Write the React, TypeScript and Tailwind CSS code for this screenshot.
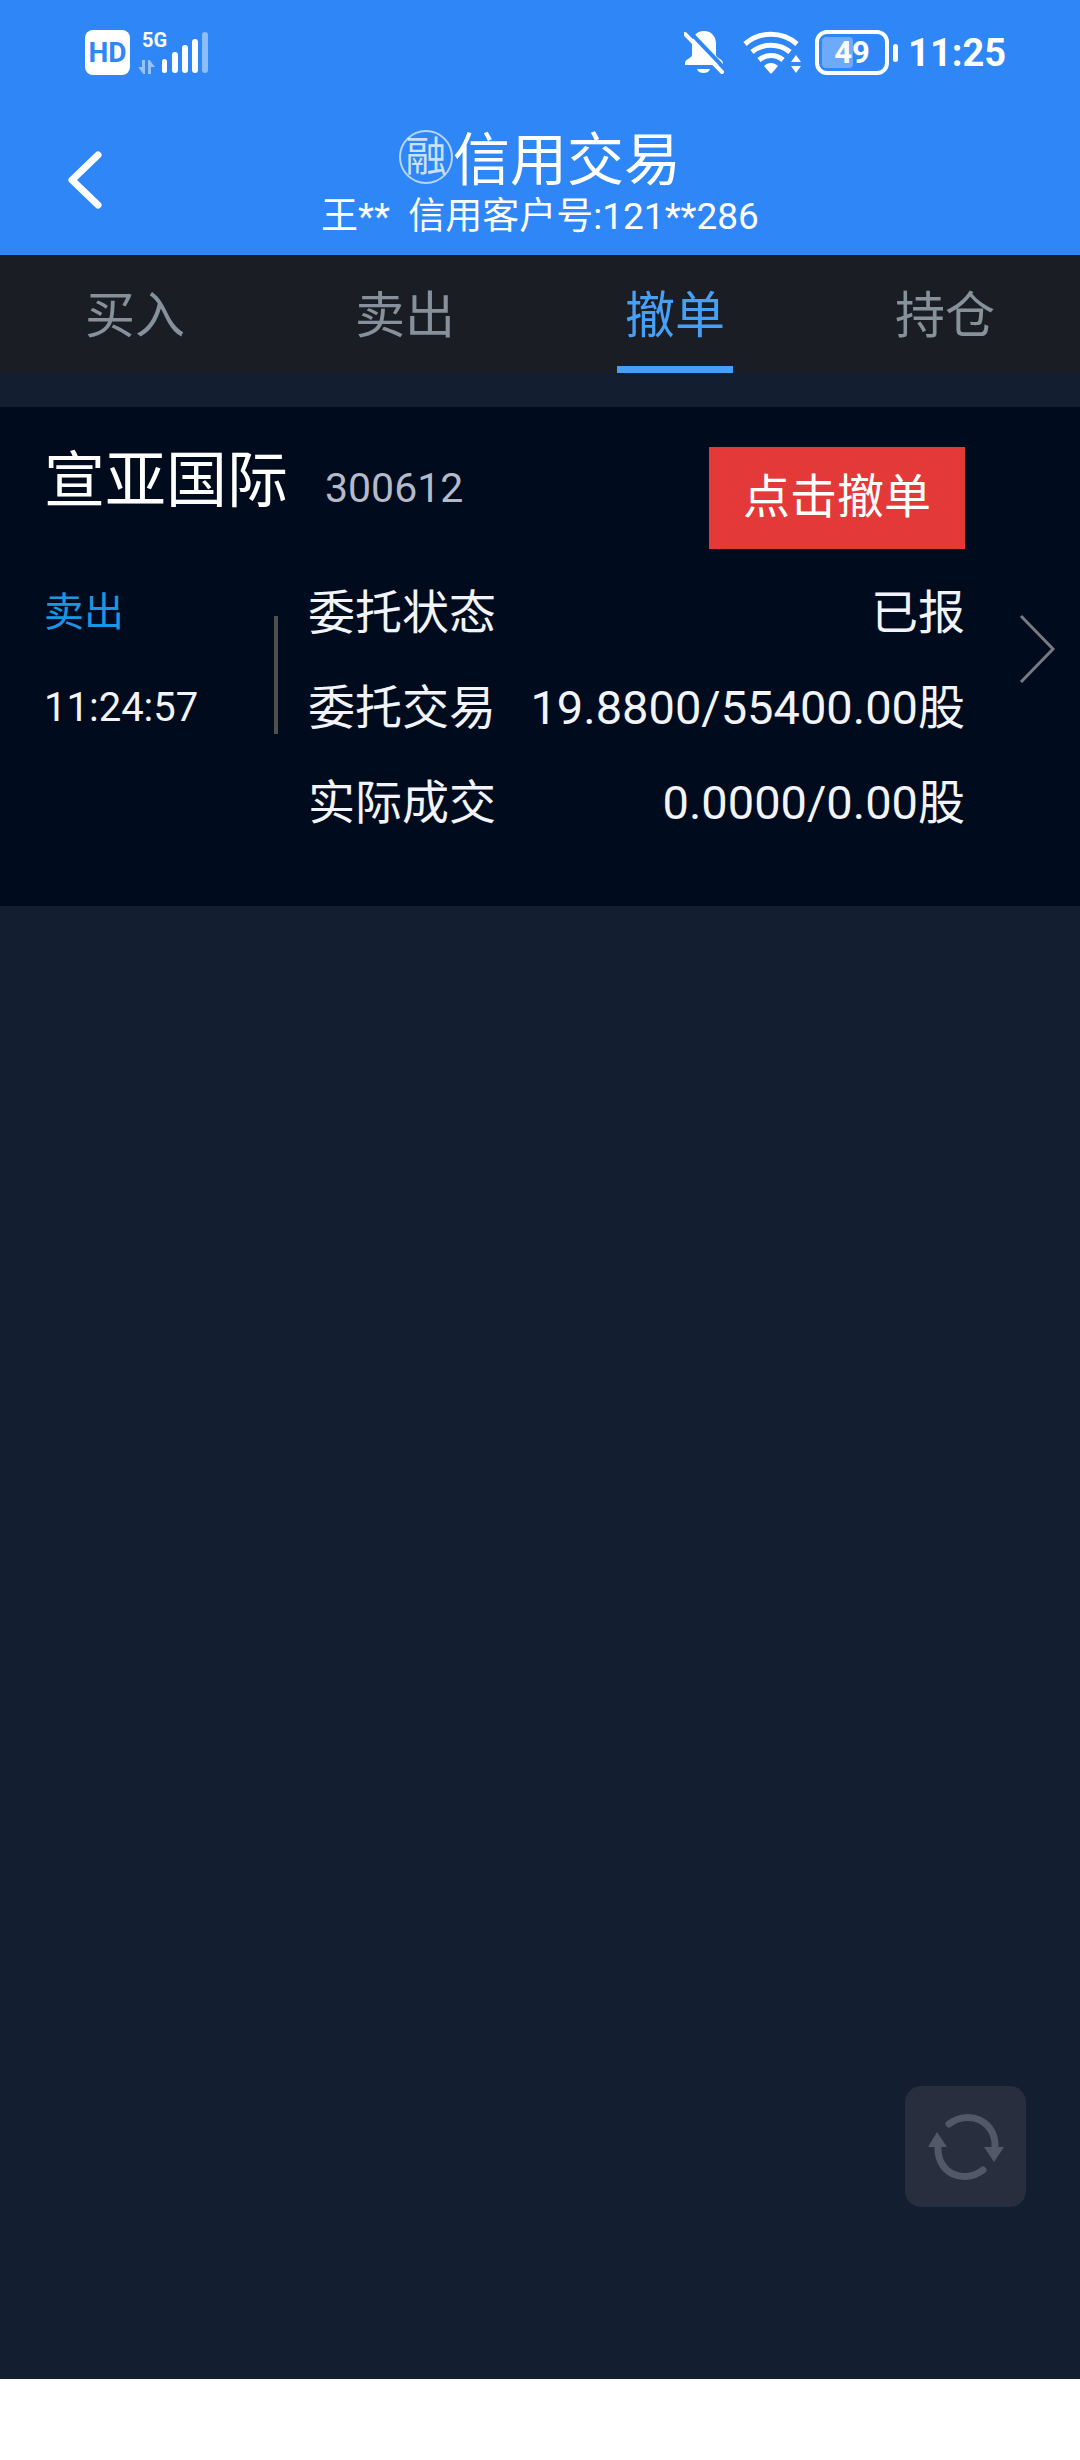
import { useState } from "react";

const tabs = ["买入", "卖出", "撤单", "持仓"];

const order = {
  name: "宣亚国际",
  code: "300612",
  side: "卖出",
  time: "11:24:57",
  rows: [
    { label: "委托状态", value: "已报" },
    { label: "委托交易", value: "19.8800/55400.00股" },
    { label: "实际成交", value: "0.0000/0.00股" }
  ]
};

function SignalIcon() {
  return (
    <svg width="70" height="45" viewBox="0 0 70 45" fill="#fff" aria-hidden="true">
      <g opacity="0.5">
        <path d="M4 30h3v14H5.500L0 37h4z" />
        <path d="M10 30h1.500L17 37h-4v7h-3z" />
      </g>
      <rect x="24" y="29" width="5" height="14" rx="2.500" />
      <rect x="34" y="22" width="6" height="21" rx="3" />
      <rect x="44" y="15" width="6" height="28" rx="3" />
      <rect x="54" y="9" width="6" height="34" rx="3" />
      <rect x="64" y="2" width="6" height="41" rx="3" opacity="0.45" />
    </svg>
  );
}

function BellOffIcon() {
  return (
    <svg width="40" height="45" viewBox="0 0 40 45" aria-hidden="true">
      <path d="M20 1C12 1 8 7 8 14v11c0 3-7 4-7 8v2h38v-2c0-4-7-5-7-8V14C32 7 28 1 20 1z" fill="#fff" />
      <path d="M13 39h13c-1 3-4 4-6.500 4S14 42 13 39z" fill="#fff" />
      <path d="M4 0l38 40" stroke="#2f86f6" strokeWidth="4" />
      <path d="M1 4l37 38" stroke="#fff" strokeWidth="4" strokeLinecap="round" />
    </svg>
  );
}

function WifiIcon() {
  return (
    <svg width="58" height="45" viewBox="0 0 58 45" aria-hidden="true">
      <g fill="none" stroke="#fff" strokeWidth="5">
        <path d="M2 14C17 1 39 1 54 14" />
        <path d="M9 22c11-9 27-9 38 0" />
        <path d="M16 30c7-6 17-6 24 0" />
      </g>
      <path d="M21 36c4-4 10-4 14 0l-6 7q-1 1-2 0z" fill="#fff" />
      <path d="M53 25l5 7H48zM48 36h10l-5 7z" fill="#fff" />
    </svg>
  );
}

function RefreshIcon() {
  return (
    <svg width="76" height="68" viewBox="0 0 76 68" aria-hidden="true">
      <g fill="none" stroke="#515868" strokeWidth="7" strokeLinecap="round">
        <path d="M21 11C41-4 68 8 67 34" />
        <path d="M55 57C35 72 9 60 10 34" />
      </g>
      <path d="M56 34h20L66 49zM0 34h19L9 19z" fill="#515868" />
    </svg>
  );
}

function StatusBar() {
  return (
    <div className="flex h-[105px] items-center justify-between pr-[74px] pl-[85px] font-bold">
      <div className="flex items-center">
        <span className="flex size-[45px] items-center justify-center rounded-lg bg-white text-[28px] leading-none text-[#2f86f6]">
          HD
        </span>
        <div className="relative ml-2">
          <SignalIcon />
          <span className="absolute top-0 left-1 text-[20px] leading-5">5G</span>
        </div>
      </div>
      <div className="flex items-center">
        <BellOffIcon />
        <span className="ml-[19px]">
          <WifiIcon />
        </span>
        <div className="relative ml-[14px] flex h-[45px] w-[74px] items-center justify-center rounded-xl border-4 border-white">
          <span className="absolute inset-y-[3px] left-[3px] w-[31px] rounded-sm bg-white/30" />
          <span className="relative text-[31px] leading-none">49</span>
        </div>
        <span className="ml-1 h-[18px] w-[5px] rounded-full bg-white" />
        <span className="ml-[10px] text-[38px] leading-none">11:25</span>
      </div>
    </div>
  );
}

function TitleBar() {
  return (
    <div className="grid h-[150px] grid-cols-[170px_1fr_170px]">
      <button type="button" aria-label="返回" className="flex items-center pl-[67px]">
        <svg width="36" height="60" viewBox="0 0 36 60" fill="none" stroke="#fff" strokeWidth="7" strokeLinecap="round" strokeLinejoin="round">
          <path d="M31 5L5 30l26 25" />
        </svg>
      </button>
      <div className="flex flex-col items-center pt-[25px]">
        <h1 className="flex items-start text-[57px] leading-[62px]">
          <span className="flex size-[54px] items-center justify-center rounded-full border-2 border-white/65 text-[41px] leading-none text-white/75">
            融
          </span>
          信用交易
        </h1>
        <p className="text-[37px] leading-[50px] whitespace-pre">王**  信用客户号:121**286</p>
      </div>
    </div>
  );
}

function OrderCard() {
  return (
    <section className="flex bg-[#000b1e] pt-10 pr-[24px] pb-[56px] pl-[44px] text-[#f2f4fa]">
      <div className="flex-1">
        <div className="flex items-start justify-between">
          <div className="flex items-baseline gap-[37px]">
            <h2 className="text-[61px] leading-[68px] text-white">{order.name}</h2>
            <span className="text-[41px] text-[#b4bac8]">{order.code}</span>
          </div>
          <button type="button" className="h-[102px] bg-[#e33939] px-[34px] pb-1 text-[47px] leading-none text-white">
            点击撤单
          </button>
        </div>
        <div className="mt-4 flex">
          <div className="w-[230px] text-[40px] leading-[95px]">
            <p className="text-[#1a97e0]">{order.side}</p>
            <p>{order.time}</p>
          </div>
          <span className="mt-[51px] h-[118px] w-1 bg-[#4f504d]" />
          <dl className="ml-[30px] flex-1 text-[47px] leading-[95px]">
            {order.rows.map((row) => (
              <div key={row.label} className="flex justify-between">
                <dt>{row.label}</dt>
                <dd>{row.value}</dd>
              </div>
            ))}
          </dl>
        </div>
      </div>
      <button type="button" aria-label="查看详情" className="ml-[54px] self-center">
        <svg width="37" height="70" viewBox="0 0 37 70" fill="none" stroke="#777a80" strokeWidth="3">
          <path d="M2 2l32 33L2 68" />
        </svg>
      </button>
    </section>
  );
}

export default function App() {
  const [active, setActive] = useState("撤单");

  return (
    <div className="flex min-h-screen flex-col bg-[#131e30] font-['Roboto','Noto_Sans_CJK_SC',sans-serif] text-white">
      <header className="bg-[#2f86f6]">
        <StatusBar />
        <TitleBar />
      </header>

      <nav className="grid h-[118px] grid-cols-4 bg-[#1a1e24] text-[50px] leading-none">
        {tabs.map((tab) => (
          <button
            key={tab}
            type="button"
            onClick={() => setActive(tab)}
            className={`relative flex items-center justify-center pt-1 ${tab === active ? "text-[#489ff6]" : "text-[#87919b]"}`}
          >
            {tab}
            {tab === active && <span className="absolute bottom-0 h-[7px] w-[116px] bg-[#489ff6]" />}
          </button>
        ))}
      </nav>

      <main className="relative flex-1 pt-[34px]">
        <OrderCard />
        <button
          type="button"
          aria-label="刷新"
          className="absolute right-[54px] bottom-[172px] flex size-[121px] items-center justify-center rounded-2xl bg-[#282e3d]"
        >
          <RefreshIcon />
        </button>
      </main>

      <footer className="h-[81px] bg-white" />
    </div>
  );
}
